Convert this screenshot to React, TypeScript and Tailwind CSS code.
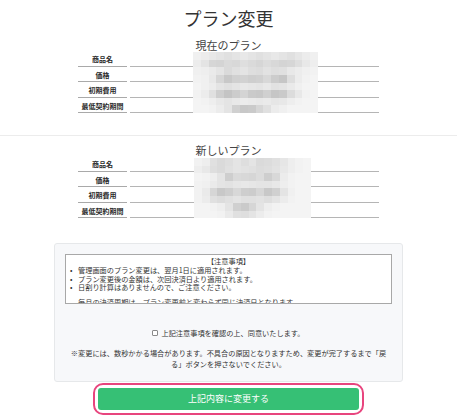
import React from "react";

const FONT = "font-['Noto_Sans_CJK_JP','Noto_Sans',sans-serif]";

// Grey levels for the pixelated (masked) value cells, row by row
const MASK_CURRENT: number[][] = [
  [248, 244, 240, 236, 232, 236, 240, 236, 232, 236, 240, 236, 232, 238, 244, 248],
  [244, 236, 222, 220, 226, 224, 230, 226, 222, 228, 224, 220, 222, 230, 240, 246],
  [248, 246, 242, 236, 226, 232, 236, 230, 228, 234, 230, 232, 240, 244, 248, 250],
  [250, 248, 240, 222, 208, 216, 218, 214, 216, 224, 212, 206, 230, 244, 250, 252],
  [252, 248, 244, 236, 232, 236, 240, 238, 236, 240, 234, 236, 242, 248, 252, 252],
  [250, 244, 232, 214, 204, 212, 220, 210, 208, 216, 206, 210, 228, 240, 250, 252],
  [252, 250, 246, 240, 236, 240, 244, 242, 240, 242, 238, 240, 246, 250, 252, 252],
  [252, 252, 250, 244, 236, 216, 208, 210, 222, 232, 244, 248, 252, 252, 252, 252],
];

const MASK_NEW: number[][] = [
  [250, 246, 232, 226, 230, 236, 230, 236, 226, 228, 232, 238, 246, 250, 252],
  [246, 240, 230, 226, 232, 236, 234, 232, 228, 230, 234, 240, 246, 250, 252],
  [252, 250, 246, 236, 214, 226, 224, 222, 228, 214, 224, 244, 250, 252, 252],
  [250, 248, 242, 236, 234, 238, 240, 238, 236, 236, 240, 246, 250, 252, 252],
  [250, 242, 222, 208, 214, 224, 214, 212, 222, 208, 216, 236, 248, 252, 252],
  [250, 244, 232, 228, 232, 236, 232, 232, 234, 230, 236, 244, 250, 252, 252],
  [252, 252, 250, 246, 236, 216, 210, 222, 236, 246, 250, 252, 252, 252, 252],
  [252, 252, 252, 250, 242, 232, 230, 236, 244, 250, 252, 252, 252, 252, 252],
];

function Mosaic({ grid, className }: { grid: number[][]; className: string }) {
  return (
    <div className={`absolute grid ${className}`}>
      {grid.map((row, r) => (
        <div key={r} className="flex flex-1">
          {row.map((g, c) => {
            const v = Math.max(0, g - 8);
            return <div key={c} className="flex-1" style={{ backgroundColor: `rgb(${v},${v},${v})` }} />;
          })}
        </div>
      ))}
    </div>
  );
}

const LABELS = ["商品名", "価格", "初期費用", "最低契約期間"];

function PlanTable({ grid, maskClass }: { grid: number[][]; maskClass: string }) {
  return (
    <div className="relative mx-auto w-[301px]">
      {LABELS.map((label) => (
        <div key={label} className="flex h-[15.5px]">
          <div className="flex w-[49px] items-end justify-center border-b border-[#a9a9a9] pb-[1.5px] text-[7px] font-bold leading-[9px] text-[#2a2a2a]">
            {label}
          </div>
          <div className="ml-[3px] flex-1 border-b border-[#b5b5b5]" />
        </div>
      ))}
      <Mosaic grid={grid} className={maskClass} />
    </div>
  );
}

const NOTES = [
  "管理画面のプラン変更は、翌月1日に適用されます。",
  "プラン変更後の金額は、次回決済日より適用されます。",
  "日割り計算はありませんので、ご注意ください。",
];

export default function App() {
  return (
    <div className={`h-[420px] w-[457px] overflow-hidden bg-white text-[#333] ${FONT}`}>
      <h1 className="pt-[7px] text-center text-[18px] leading-[22px] text-[#333]">プラン変更</h1>

      <section className="border-b border-[#ececec] pb-[22px]">
        <h2 className="mt-[10px] text-center text-[11px] leading-[12px] text-[#444]">現在のプラン</h2>
        <PlanTable grid={MASK_CURRENT} maskClass="left-[115px] top-[1px] h-[61px] w-[125px]" />
      </section>

      <section>
        <h2 className="mt-[8px] text-center text-[11px] leading-[12px] text-[#444]">新しいプラン</h2>
        <PlanTable grid={MASK_NEW} maskClass="left-[116px] top-[2px] h-[60px] w-[117px]" />
      </section>

      <div className="mx-auto mt-[25px] w-[349px] rounded-[3px] border border-[#e6e8ea] bg-[#f7f8fa] px-[10px] pb-[11px] pt-[10px]">
        <div className="h-[50px] overflow-hidden border border-[#a8a8a8] bg-white px-[3px] pt-[2px] text-[7.2px] leading-[8.8px] text-[#333]">
          <div className="text-center">【注意事項】</div>
          {NOTES.map((n) => (
            <div key={n} className="flex whitespace-nowrap">
              <span className="w-[9px] shrink-0 pl-[1px]">•</span>
              <span>{n}</span>
            </div>
          ))}
          <div className="mt-[6px] flex whitespace-nowrap">
            <span className="w-[9px] shrink-0 pl-[1px]" />
            <span>毎月の決済周期は、プラン変更前と変わらず同じ決済日となります。</span>
          </div>
        </div>

        <div className="mt-[24px] flex items-center justify-center text-[7.2px] leading-[10px] text-[#333]">
          <span className="mr-[3px] inline-block h-[6px] w-[6px] rounded-[1px] border border-[#8a8a8a] bg-white" />
          <span>上記注意事項を確認の上、同意いたします。</span>
        </div>

        <p className="mx-auto mt-[10px] w-[318px] text-center text-[7.2px] leading-[11px] text-[#333]">
          ※変更には、数秒かかる場合があります。不具合の原因となりますため、変更が完了するまで「戻る」ボタンを押さないでください。
        </p>
      </div>

      <div className="mx-auto mt-[1px] w-[271px] rounded-[10px] border-[2.5px] border-[#e8457e] p-[3px]">
        <button className="flex h-[22px] w-full items-center justify-center rounded-[3px] bg-[#36c075] text-[9px] leading-[10px] text-white">
          上記内容に変更する
        </button>
      </div>
    </div>
  );
}
